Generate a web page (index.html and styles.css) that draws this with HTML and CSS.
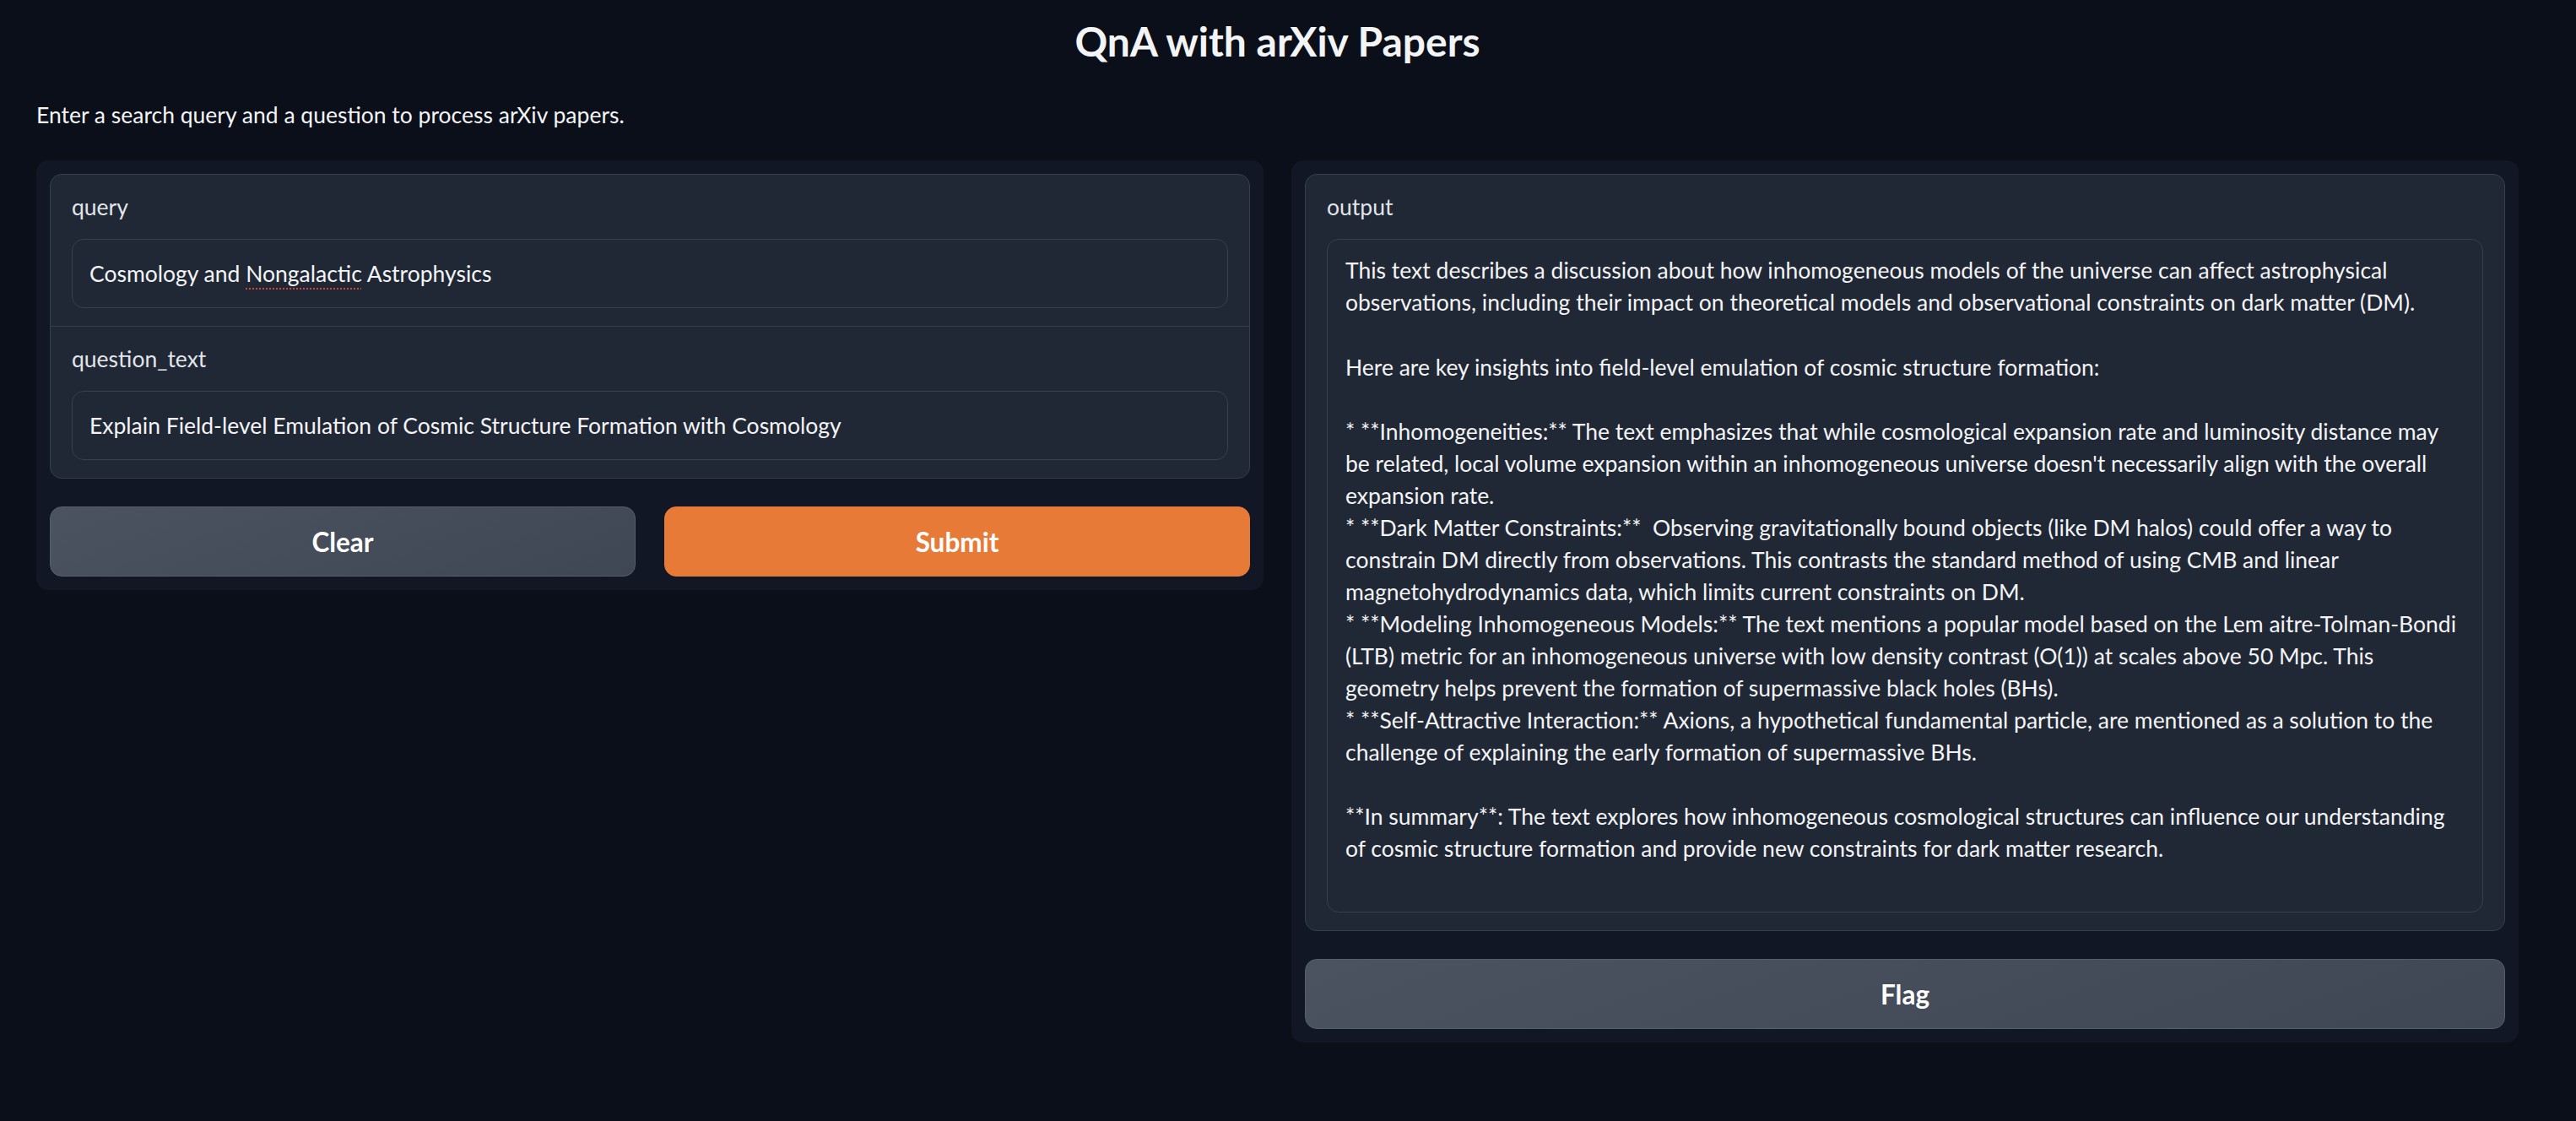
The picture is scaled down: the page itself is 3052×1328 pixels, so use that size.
FILE: index.html
```html
<!DOCTYPE html>
<html lang="en">
<head>
<meta charset="utf-8">
<title>QnA with arXiv Papers</title>
<link rel="stylesheet" href="styles.css">
</head>
<body>
<div class="app">
  <h1 class="title">QnA with arXiv Papers</h1>
  <p class="desc">Enter a search query and a question to process arXiv papers.</p>
  <div class="columns">
    <div class="panel">
      <div class="block">
        <div class="field">
          <div class="label">query</div>
          <div class="input"><span class="input-text">Cosmology and <span class="spell">Nongalactic</span> Astrophysics</span></div>
        </div>
        <div class="field field-sep">
          <div class="label">question_text</div>
          <div class="input"><span class="input-text">Explain Field-level Emulation of Cosmic Structure Formation with Cosmology</span></div>
        </div>
      </div>
      <div class="btn-row">
        <button class="btn btn-secondary">Clear</button>
        <button class="btn btn-primary">Submit</button>
      </div>
    </div>
    <div class="panel">
      <div class="block">
        <div class="field">
          <div class="label">output</div>
          <div class="textarea">This text describes a discussion about how inhomogeneous models of the universe can affect astrophysical
observations, including their impact on theoretical models and observational constraints on dark matter (DM).

Here are key insights into field-level emulation of cosmic structure formation:

* **Inhomogeneities:** The text emphasizes that while cosmological expansion rate and luminosity distance may
be related, local volume expansion within an inhomogeneous universe doesn't necessarily align with the overall
expansion rate.
* **Dark Matter Constraints:**  Observing gravitationally bound objects (like DM halos) could offer a way to
constrain DM directly from observations. This contrasts the standard method of using CMB and linear
magnetohydrodynamics data, which limits current constraints on DM.
* **Modeling Inhomogeneous Models:** The text mentions a popular model based on the Lem aitre-Tolman-Bondi
(LTB) metric for an inhomogeneous universe with low density contrast (O(1)) at scales above 50 Mpc. This
geometry helps prevent the formation of supermassive black holes (BHs).
* **Self-Attractive Interaction:** Axions, a hypothetical fundamental particle, are mentioned as a solution to the
challenge of explaining the early formation of supermassive BHs.

**In summary**: The text explores how inhomogeneous cosmological structures can influence our understanding
of cosmic structure formation and provide new constraints for dark matter research.</div>
        </div>
      </div>
      <button class="btn btn-secondary btn-full">Flag</button>
    </div>
  </div>
</div>
</body>
</html>
```
FILE: styles.css
```css
* { box-sizing: border-box; }
html, body {
  margin: 0;
  padding: 0;
  background: #0b0f19;
  color: #f3f4f6;
  font-family: Lato, "Open Sans", sans-serif;
  height: 100%;
}
.app {
  margin-left: 43px;
  width: 2941px;
  padding-top: 20px;
}
.title {
  margin: 0;
  text-align: center;
  font-size: 48px;
  font-weight: 700;
  line-height: 57.6px;
  color: #f3f4f6;
}
.desc {
  margin: 43px 0 0 0;
  font-size: 26.5px;
  line-height: 31.8px;
  color: #f3f4f6;
}
.columns {
  margin-top: 38px;
  display: flex;
  gap: 33px;
  align-items: flex-start;
}
.panel {
  flex: 1 1 0;
  background: #111725;
  border-radius: 14px;
  padding: 16px;
  display: flex;
  flex-direction: column;
  gap: 33px;
}
.block {
  background: #212835;
  border: 1px solid #373f4d;
  border-radius: 14px;
  overflow: hidden;
}
.field {
  padding: 22px 25px 21px 25px;
}
.field-sep {
  border-top: 1px solid #373f4d;
}
.label {
  font-size: 26.5px;
  line-height: 32px;
  color: #e2e5ea;
  margin-bottom: 22px;
}
.input {
  height: 82px;
  border: 1px solid #393f4d;
  border-radius: 14px;
  background: #212835;
  padding: 0 20px;
  display: flex;
  align-items: center;
  font-size: 26.5px;
  line-height: 32px;
  color: #f3f4f6;
}
.input-text {
  white-space: pre;
}
.spell {
  text-decoration: underline dotted #d0453a;
  text-decoration-thickness: 2px;
  text-underline-offset: 7px;
}
.textarea {
  height: 798px;
  border: 1px solid #393f4d;
  border-radius: 14px;
  background: #212835;
  padding: 17px 21px;
  font-size: 26.5px;
  line-height: 38.05px;
  white-space: pre;
  color: #f3f4f6;
  overflow: hidden;
}
.btn-row {
  display: flex;
  gap: 34px;
}
.btn {
  flex: 1 1 0;
  height: 83px;
  border-radius: 14px;
  font-family: Lato, "Open Sans", sans-serif;
  font-size: 31.5px;
  font-weight: 700;
  color: #ffffff;
  cursor: pointer;
}
.btn-secondary {
  background: linear-gradient(160deg, #4b5361 0%, #3f4654 100%);
  border: 1px solid #575e6b;
}
.btn-primary {
  background: #e87a38;
  border: 1px solid #e87a38;
}
.btn-full {
  flex: none;
  width: 100%;
}
```
